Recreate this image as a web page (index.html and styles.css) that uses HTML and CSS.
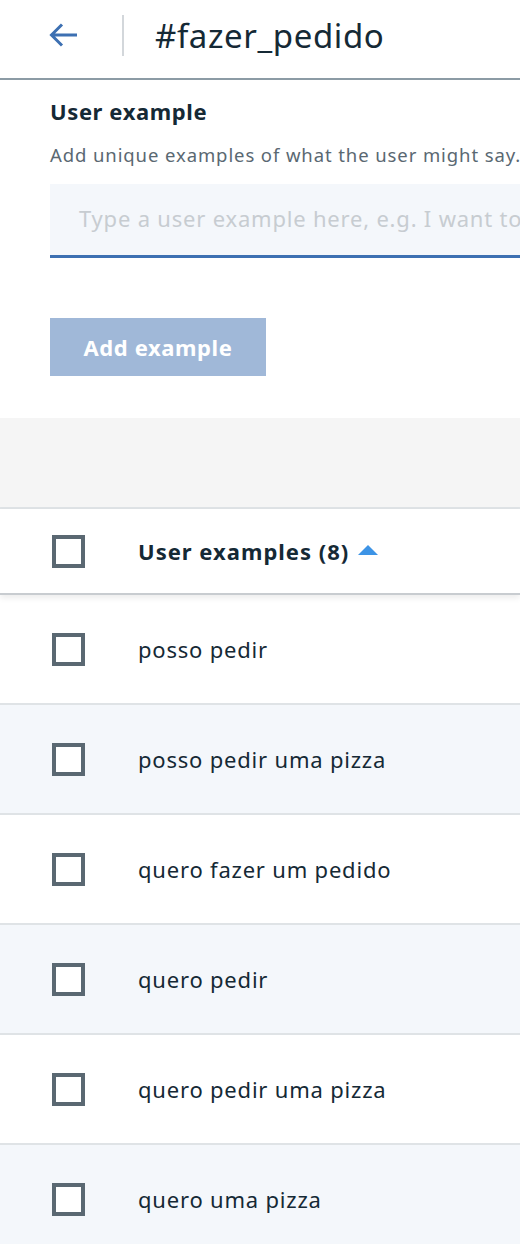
FILE: index.html
```html
<!DOCTYPE html>
<html lang="pt">
<head>
<meta charset="utf-8">
<title>#fazer_pedido</title>
<link rel="stylesheet" href="styles.css">
</head>
<body>
<header class="topbar">
  <button class="back" aria-label="Back">
    <svg width="30" height="26" viewBox="0 0 30 26"><path d="M28 13H3M13 2.5L2.5 13L13 23.5" fill="none" stroke="#3d70b2" stroke-width="3"/></svg>
  </button>
  <span class="divider"></span>
  <h1 class="title">#fazer_pedido</h1>
</header>
<section class="form">
  <h2 class="label">User example</h2>
  <p class="helper">Add unique examples of what the user might say.</p>
  <div class="input">Type a user example here, e.g. I want to</div>
  <button class="add">Add example</button>
</section>
<div class="band"></div>
<div class="table">
  <div class="thead">
    <span class="check"></span>
    <span class="th">User examples (8)</span>
    <span class="sort"></span>
  </div>
  <div class="row"><span class="check"></span><span class="cell">posso pedir</span></div>
  <div class="row alt"><span class="check"></span><span class="cell">posso pedir uma pizza</span></div>
  <div class="row"><span class="check"></span><span class="cell">quero fazer um pedido</span></div>
  <div class="row alt"><span class="check"></span><span class="cell">quero pedir</span></div>
  <div class="row"><span class="check"></span><span class="cell">quero pedir uma pizza</span></div>
  <div class="row alt"><span class="check"></span><span class="cell">quero uma pizza</span></div>
</div>
</body>
</html>
```
FILE: styles.css
```css
* { box-sizing: border-box; }
html, body { margin: 0; padding: 0; }
body {
  width: 520px;
  overflow: hidden;
  background: #fff;
  font-family: "Noto Sans", "Open Sans", sans-serif;
  color: #152935;
}
.topbar {
  height: 80px;
  display: flex;
  align-items: center;
  border-bottom: 2px solid #8c9ba5;
  padding-left: 49px;
  padding-bottom: 8px;
}
.back {
  background: none;
  border: 0;
  padding: 0;
  width: 30px;
  height: 26px;
  display: flex;
}
.divider {
  width: 2px;
  height: 41px;
  background: #d3d7db;
  margin-left: 43px;
}
.title {
  margin: 0 0 0 31px;
  font-size: 33px;
  font-weight: 400;
  letter-spacing: 0.6px;
  color: #152935;
}
.form {
  padding: 17px 0 0 50px;
  height: 338px;
}
.label {
  margin: 0;
  font-size: 22px;
  font-weight: 700;
  line-height: 28px;
  letter-spacing: 0.6px;
}
.helper {
  margin: 18px 0 0;
  font-size: 18.5px;
  line-height: 24px;
  letter-spacing: 0.9px;
  color: #5a6872;
  white-space: nowrap;
}
.input {
  margin-top: 17px;
  height: 74px;
  background: #f4f7fb;
  border-bottom: 3px solid #3d70b2;
  padding: 19px 0 0 29px;
  font-size: 22px;
  line-height: 30px;
  letter-spacing: 0.8px;
  color: #c7ccd1;
  white-space: nowrap;
  overflow: hidden;
}
.add {
  margin-top: 60px;
  width: 216px;
  height: 58px;
  border: 0;
  background: #a0b8d8;
  color: #fff;
  font-family: inherit;
  font-size: 22px;
  font-weight: 700;
  letter-spacing: 0.6px;
  padding: 0;
}
.band {
  height: 91px;
  background: #f5f5f5;
  border-bottom: 2px solid #dfe3e6;
}
.thead {
  height: 86px;
  display: flex;
  align-items: center;
  padding-left: 52px;
  border-bottom: 2px solid #c8ccd0;
  box-shadow: 0 3px 6px rgba(0,0,0,0.08);
  position: relative;
}
.check {
  width: 33px;
  height: 33px;
  border: 4px solid #5a6872;
  background: #fff;
  flex: none;
}
.th {
  margin-left: 53px;
  font-size: 22px;
  font-weight: 700;
  letter-spacing: 1px;
}
.sort {
  margin-left: 9px;
  width: 0;
  height: 0;
  border-left: 10px solid transparent;
  border-right: 10px solid transparent;
  border-bottom: 10px solid #3d94e6;
  margin-top: -2px;
}
.row {
  height: 110px;
  display: flex;
  align-items: center;
  padding-left: 52px;
  border-bottom: 2px solid #dfe3e6;
}
.row.alt { background: #f4f7fb; }
.cell {
  margin-left: 53px;
  font-size: 22px;
  letter-spacing: 0.8px;
}
```
